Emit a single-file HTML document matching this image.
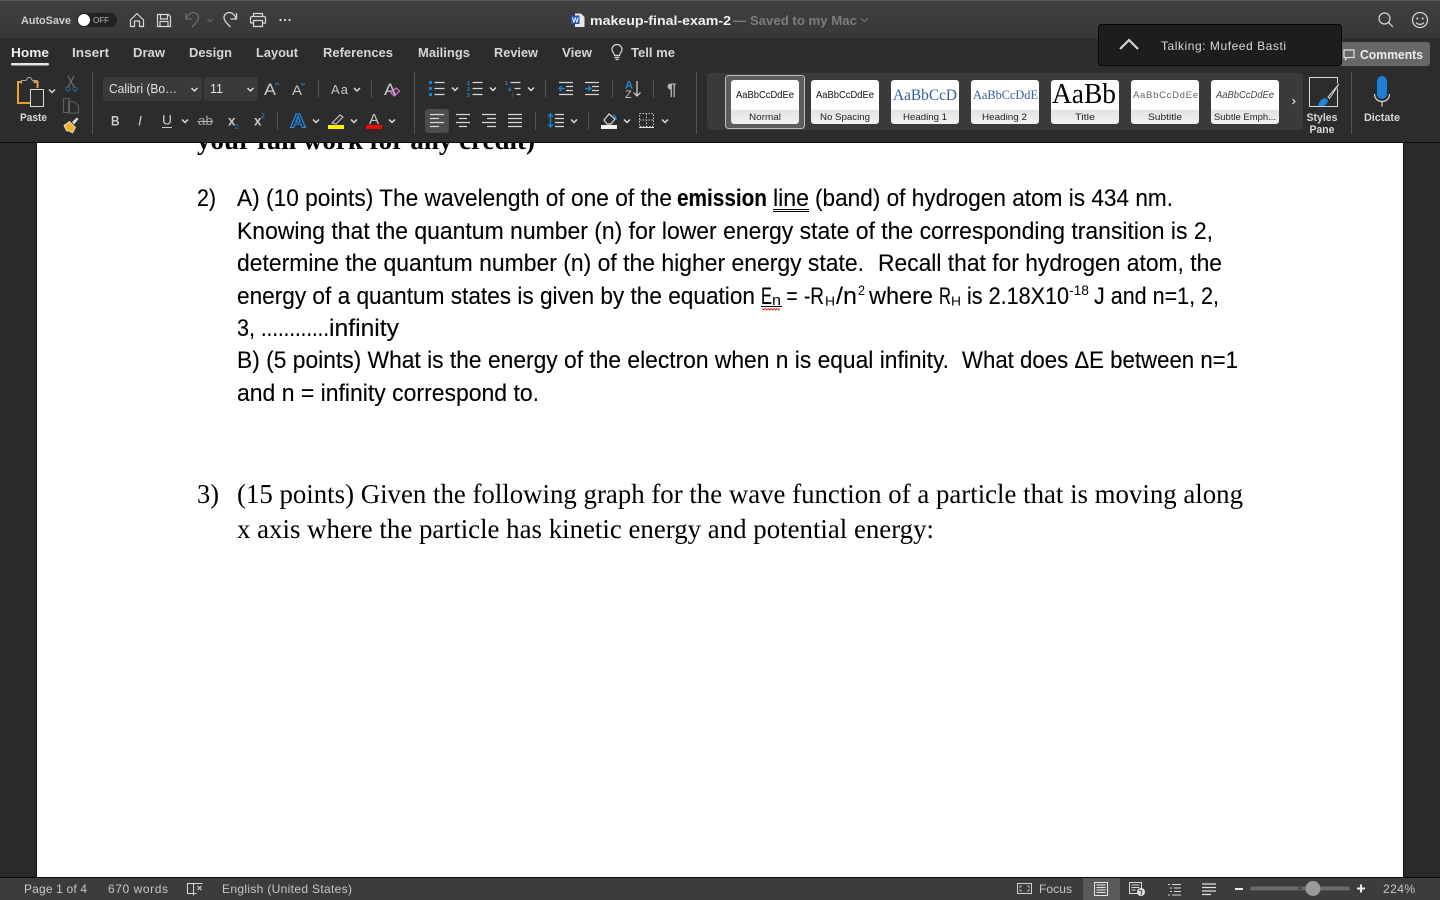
<!DOCTYPE html>
<html lang="en"><head><meta charset="utf-8"><title>makeup-final-exam-2</title>
<style>
html,body{margin:0;padding:0;width:1440px;height:900px;overflow:hidden;background:#2a2a2a}
svg{display:block;position:absolute;left:0;top:0}
text{font-family:"Liberation Sans",sans-serif;white-space:pre}
.u{fill:#d6d6d6;font-size:13px;font-weight:700}
.s{fill:#c8c8c8;font-size:12px}
.r{fill:#d8d8d8;font-size:11px}
.c{fill:#222;font-size:9px}
.d{fill:#000;font-size:24px;stroke:#000;stroke-width:.12}
.m{fill:#000;font-size:27px;font-family:"Liberation Serif",serif}
.l{stroke:#d8d8d8;stroke-width:1.2;fill:none}
.b{stroke:#0f86d8;stroke-width:1.4;fill:none}
.ch{stroke:#ddd;stroke-width:1.5;fill:none}
.dv{stroke:#555;stroke-width:1}
</style></head><body>
<svg width="1440" height="900" viewBox="0 0 1440 900" xmlns="http://www.w3.org/2000/svg">
<defs>
<linearGradient id="tb" x1="0" y1="0" x2="0" y2="1"><stop offset="0" stop-color="#3f3f3f"/><stop offset="1" stop-color="#383838"/></linearGradient>
<linearGradient id="card" x1="0" y1="0" x2="0" y2="1"><stop offset="0" stop-color="#fff"/><stop offset=".67" stop-color="#fff"/><stop offset=".68" stop-color="#e2e2e2"/><stop offset="1" stop-color="#f2f2f2"/></linearGradient>
<path id="chev" d="M-3-1.500 0 1.500 3-1.500" class="ch"/>
</defs>

<!-- document area -->
<rect width="1440" height="900" fill="#2a2a2a"/>
<rect x="36" y="140" width="1" height="740" fill="#111"/>
<rect x="37" y="140" width="1366" height="740" fill="#fff"/>
<rect x="1403" y="140" width="1" height="740" fill="#111"/>

<text x="197" y="149" class="m" style="font-weight:700" textLength="338" lengthAdjust="spacingAndGlyphs">your full work for any credit)</text>

<text x="197" y="206" class="d" textLength="19" lengthAdjust="spacingAndGlyphs">2)</text>
<text x="237" y="206" class="d" textLength="435" lengthAdjust="spacingAndGlyphs">A) (10 points) The wavelength of one of the</text>
<text x="677" y="206" class="d" style="font-weight:700" textLength="90" lengthAdjust="spacingAndGlyphs">emission</text>
<text x="773" y="206" class="d" textLength="36" lengthAdjust="spacingAndGlyphs">line</text>
<path d="M773 209.500H809M773 211.500H809" stroke="#000" stroke-width="1"/>
<text x="815" y="206" class="d" textLength="358" lengthAdjust="spacingAndGlyphs">(band) of hydrogen atom is 434 nm.</text>
<text x="237" y="239" class="d" textLength="976" lengthAdjust="spacingAndGlyphs">Knowing that the quantum number (n) for lower energy state of the corresponding transition is 2,</text>
<text x="237" y="271" class="d" textLength="627" lengthAdjust="spacingAndGlyphs">determine the quantum number (n) of the higher energy state.</text>
<text x="878" y="271" class="d" textLength="344" lengthAdjust="spacingAndGlyphs">Recall that for hydrogen atom, the</text>
<text x="237" y="304" class="d" textLength="518" lengthAdjust="spacingAndGlyphs">energy of a quantum states is given by the equation</text>
<text x="761" y="304" class="d" textLength="11" lengthAdjust="spacingAndGlyphs">E</text>
<text x="772" y="305" class="d" style="font-size:15px;stroke-width:0" textLength="9" lengthAdjust="spacingAndGlyphs">n</text>
<path d="M761 306.500H782" stroke="#000" stroke-width="1"/>
<path d="M762 308.500l1.500 1.500 1.500-1.500 1.500 1.500 1.500-1.500 1.500 1.500 1.500-1.500 1.500 1.500 1.500-1.500 1.500 1.500 1.500-1.500 1.500 1.500 1.500-1.500" stroke="#e0201c" stroke-width=".9" fill="none"/>
<text x="786.500" y="304" class="d" textLength="11" lengthAdjust="spacingAndGlyphs">=</text>
<text x="804" y="304" class="d" textLength="20" lengthAdjust="spacingAndGlyphs">-R</text>
<text x="825" y="305.500" class="d" style="font-size:13px;stroke-width:0" textLength="10" lengthAdjust="spacingAndGlyphs">H</text>
<text x="836" y="304" class="d" textLength="21" lengthAdjust="spacingAndGlyphs">/n</text>
<text x="858" y="295" class="d" style="font-size:13.500px;stroke-width:0" textLength="7" lengthAdjust="spacingAndGlyphs">2</text>
<text x="869" y="304" class="d" textLength="64" lengthAdjust="spacingAndGlyphs">where</text>
<text x="939" y="304" class="d" textLength="12" lengthAdjust="spacingAndGlyphs">R</text>
<text x="951" y="305.500" class="d" style="font-size:13px;stroke-width:0" textLength="10" lengthAdjust="spacingAndGlyphs">H</text>
<text x="967" y="304" class="d" textLength="102" lengthAdjust="spacingAndGlyphs">is 2.18X10</text>
<text x="1069" y="295" class="d" style="font-size:13.500px;stroke-width:0" textLength="20" lengthAdjust="spacingAndGlyphs">-18</text>
<text x="1094" y="304" class="d" textLength="125" lengthAdjust="spacingAndGlyphs">J and n=1, 2,</text>
<text x="237" y="336" class="d" textLength="18" lengthAdjust="spacingAndGlyphs">3,</text>
<text x="261" y="336" class="d" textLength="68" lengthAdjust="spacingAndGlyphs">............</text>
<text x="329" y="336" class="d" textLength="70" lengthAdjust="spacingAndGlyphs">infinity</text>
<text x="237" y="368" class="d" textLength="712" lengthAdjust="spacingAndGlyphs">B) (5 points) What is the energy of the electron when n is equal infinity.</text>
<text x="962" y="368" class="d" textLength="276" lengthAdjust="spacingAndGlyphs">What does ΔE between n=1</text>
<text x="237" y="401" class="d" textLength="302" lengthAdjust="spacingAndGlyphs">and n = infinity correspond to.</text>

<text x="197" y="503" class="m" textLength="22" lengthAdjust="spacingAndGlyphs">3)</text>
<text x="237" y="503" class="m" textLength="1006" lengthAdjust="spacingAndGlyphs">(15 points) Given the following graph for the wave function of a particle that is moving along</text>
<text x="237" y="538" class="m" textLength="697" lengthAdjust="spacingAndGlyphs">x axis where the particle has kinetic energy and potential energy:</text>

<!-- title bar -->
<rect x="0" y="0" width="1440" height="38" fill="url(#tb)"/>
<rect x="0" y="0" width="1440" height="1" fill="#5a5a5a"/>
<rect x="0" y="38" width="1440" height="104" fill="#2c2c2c"/>
<rect x="0" y="142" width="1440" height="1" fill="#0c0c0c"/>

<text x="21" y="24" style="font-size:11px;font-weight:700;fill:#cfcfcf" textLength="50" lengthAdjust="spacingAndGlyphs">AutoSave</text>
<rect x="77" y="13" width="40" height="14" rx="7" fill="#222"/>
<circle cx="84" cy="20" r="6" fill="#fff"/>
<text x="93" y="23" style="font-size:8px;fill:#bbb" textLength="16" lengthAdjust="spacingAndGlyphs">OFF</text>

<path d="M130.500 20 137 13.500l6.500 6.500v6.500h-4v-5.500h-5v5.500h-4z" class="l" stroke-linejoin="round"/>
<path d="M157.500 14.500h11l2 2v10h-13zM160.500 14.500v4.500h7v-4.500M160 26.500v-5h8v5" class="l"/>
<path d="M186 13v6h6M186 19c2-4.500 4-6.500 7-6.500 3.500 0 5.500 2.500 5.500 5 0 3-3 6-6.500 9.500" style="fill:none;stroke:#6b6b6b;stroke-width:1.300"/>
<path d="M207.500 19l2.500 2.500 2.500-2.500" style="fill:none;stroke:#6b6b6b;stroke-width:1.200"/>
<path d="M236.500 13v6h-6M236.500 19c-2-4.500-4-6.500-7-6.500-3.500 0-5.500 2.500-5.500 5 0 3 3 6 6.500 9.500" class="l" style="stroke-width:1.300"/>
<path d="M253.500 17v-3.500h9v3.500M250.500 23v-5a1.500 1.500 0 0 1 1.500-1.500h12a1.500 1.500 0 0 1 1.500 1.500v5h-3M253.500 23h-3M253.500 20.500h9v6h-9z" class="l"/>
<circle cx="280.500" cy="20" r="1.100" fill="#ddd"/><circle cx="285" cy="20" r="1.100" fill="#ddd"/><circle cx="289.500" cy="20" r="1.100" fill="#ddd"/>

<!-- doc title -->
<path d="M575 13.500h6l3.500 3.500v10h-9.500z" fill="#e8e8e8"/>
<rect x="571" y="15.500" width="8.500" height="8.500" fill="#1f57c3"/>
<text x="572" y="22.500" style="font-size:7px;font-weight:700;fill:#fff">W</text>
<text x="590" y="25" style="font-size:13px;font-weight:700;fill:#f0f0f0" textLength="141" lengthAdjust="spacingAndGlyphs">makeup-final-exam-2</text>
<text x="733" y="25" style="font-size:13px;font-weight:700;fill:#7d7d7d" textLength="124" lengthAdjust="spacingAndGlyphs">— Saved to my Mac</text>
<path d="M861 18.500l3.500 3 3.500-3" style="fill:none;stroke:#7d7d7d;stroke-width:1.100"/>

<circle cx="1384.500" cy="18.500" r="5.500" class="l"/><path d="M1388.500 22.500l4.500 4.500" class="l"/>
<circle cx="1420" cy="20" r="7.500" class="l"/><circle cx="1417.300" cy="18.500" r="1" fill="#ddd"/><circle cx="1422.700" cy="18.500" r="1" fill="#ddd"/><path d="M1416 22.500c2 2.500 6 2.500 8 0" class="l"/>

<!-- tabs -->
<text x="11" y="57" class="u" style="fill:#f0f0f0" textLength="38" lengthAdjust="spacingAndGlyphs">Home</text>
<rect x="11" y="63" width="38" height="2.500" rx="1" fill="#e6e6e6"/>
<text x="72" y="57" class="u" textLength="37" lengthAdjust="spacingAndGlyphs">Insert</text>
<text x="133" y="57" class="u" textLength="32" lengthAdjust="spacingAndGlyphs">Draw</text>
<text x="189" y="57" class="u" textLength="43" lengthAdjust="spacingAndGlyphs">Design</text>
<text x="256" y="57" class="u" textLength="42" lengthAdjust="spacingAndGlyphs">Layout</text>
<text x="323" y="57" class="u" textLength="70" lengthAdjust="spacingAndGlyphs">References</text>
<text x="418" y="57" class="u" textLength="52" lengthAdjust="spacingAndGlyphs">Mailings</text>
<text x="494" y="57" class="u" textLength="44" lengthAdjust="spacingAndGlyphs">Review</text>
<text x="562" y="57" class="u" textLength="30" lengthAdjust="spacingAndGlyphs">View</text>
<path d="M614.500 55.500c0-2.500-2.500-3-2.500-6a5 5 0 0 1 10 0c0 3-2.500 3.500-2.500 6zM614.500 57.500h5M615.500 59.500h3" class="l"/>
<text x="631" y="57" class="u" textLength="44" lengthAdjust="spacingAndGlyphs">Tell me</text>

<!-- comments + notification -->
<rect x="1330" y="42" width="100" height="24" rx="3" fill="#676767"/>
<path d="M1344 50h10v7.500h-6.500l-2 2v-2h-1.500z" class="l" style="stroke:#e0e0e0"/>
<text x="1360" y="59" class="u" style="fill:#ececec" textLength="63" lengthAdjust="spacingAndGlyphs">Comments</text>
<rect x="1098.500" y="24.500" width="243" height="41" rx="3" fill="#1d1d1d" stroke="#070707"/>
<path d="M1120 49l9-9 9 9" style="fill:none;stroke:#d4d4d4;stroke-width:2.200"/>
<text x="1161" y="50" style="font-size:12px;fill:#d8d8d8" textLength="125">Talking: Mufeed Basti</text>

<!-- clipboard -->
<path d="M21 82h-3v21h12M33.500 82h4v6" style="fill:none;stroke:#f0a01e;stroke-width:2"/>
<path d="M21.500 84v-3.500h4.500l2-3h2.500l2 3h4.500v3" style="fill:none;stroke:#a8a8a8;stroke-width:1"/>
<rect x="30.500" y="89.500" width="13" height="17" fill="#2c2c2c" stroke="#d8d8d8" stroke-width="1"/>
<use href="#chev" x="52" y="91"/>
<text x="20" y="121" class="r" style="font-weight:700" textLength="27" lengthAdjust="spacingAndGlyphs">Paste</text>
<path d="M68 76l6 11M74 76l-6 11" style="stroke:#707070;stroke-width:1.200"/>
<circle cx="68" cy="89" r="2" fill="none" stroke="#2a6da8"/><circle cx="75" cy="89" r="2" fill="none" stroke="#2a6da8"/>
<path d="M63.500 98.500h6v14h-6zM68.500 101.500h5l5 4v7.500h-10z" style="fill:#2c2c2c;stroke:#5e5e5e;stroke-width:1.100"/>
<path d="M64 125.500l5.500-4 6 6-3 5.500-3.500-2-2.500 0z" fill="#f0b030" stroke="#e8e8e8" stroke-width=".8"/><path d="M72 122l5-4.500 1.500 1.500-4.500 5.500z" fill="#ddd"/>
<line class="dv" x1="92.500" y1="72" x2="92.500" y2="134"/>

<!-- font -->
<rect x="103" y="77" width="99" height="24" rx="3" fill="#3a3a3a"/>
<rect x="204" y="77" width="54" height="24" rx="3" fill="#3a3a3a"/>
<text x="109" y="93" style="font-size:12.500px;fill:#e2e2e2" textLength="68" lengthAdjust="spacingAndGlyphs">Calibri (Bo…</text>
<use href="#chev" x="194.500" y="89.500"/>
<text x="210" y="93" style="font-size:12.500px;fill:#e2e2e2">11</text>
<use href="#chev" x="250.500" y="89.500"/>
<text x="264" y="95" style="font-size:17px;fill:#c8c8c8" textLength="12" lengthAdjust="spacingAndGlyphs">A</text><path d="M275 85l2-2 2 2" class="b" style="stroke-width:1"/>
<text x="292" y="95" style="font-size:14px;fill:#c8c8c8" textLength="10" lengthAdjust="spacingAndGlyphs">A</text><path d="M301 83l2 2 2-2" class="b" style="stroke-width:1"/>
<line class="dv" x1="318.500" y1="80" x2="318.500" y2="98"/>
<text x="331" y="94" style="font-size:13px;fill:#c8c8c8" textLength="17">Aa</text>
<use href="#chev" x="357" y="89.500"/>
<line class="dv" x1="371.500" y1="80" x2="371.500" y2="98"/>
<text x="384" y="95" style="font-size:17px;fill:#c8c8c8" textLength="12" lengthAdjust="spacingAndGlyphs">A</text>
<path d="M391 93l5-5 3.500 3-5 5z" fill="none" stroke="#d468d0" stroke-width="1.300"/>
<line class="dv" x1="414.500" y1="72" x2="414.500" y2="134"/>

<text x="111" y="125.500" style="font-size:14px;font-weight:700;fill:#c8c8c8" textLength="8.500" lengthAdjust="spacingAndGlyphs">B</text>
<text x="138" y="125.500" style="font-size:14px;font-style:italic;fill:#c8c8c8">I</text>
<text x="162" y="124.500" style="font-size:13.500px;fill:#c8c8c8" textLength="10" lengthAdjust="spacingAndGlyphs">U</text><rect x="162" y="127" width="10" height="1" fill="#c8c8c8"/>
<use href="#chev" x="185" y="121"/>
<text x="198" y="125" style="font-size:13px;fill:#a8a8a8" textLength="15" lengthAdjust="spacingAndGlyphs">ab</text><rect x="197" y="121" width="16" height="1" fill="#b0b0b0"/>
<text x="228" y="125.500" style="font-size:14px;font-weight:700;fill:#c8c8c8" textLength="7.500" lengthAdjust="spacingAndGlyphs">x</text><text x="235" y="129" style="font-size:7px;fill:#1e8ee0">2</text>
<text x="254" y="125.500" style="font-size:14px;font-weight:700;fill:#c8c8c8" textLength="7.500" lengthAdjust="spacingAndGlyphs">x</text><text x="261" y="118" style="font-size:7px;fill:#1e8ee0">2</text>
<line class="dv" x1="277.500" y1="112" x2="277.500" y2="130"/>
<text x="290" y="127.500" style="font-size:19px;font-weight:700;fill:#17334f;stroke:#2f8fe6;stroke-width:1" textLength="16" lengthAdjust="spacingAndGlyphs">A</text>
<use href="#chev" x="316" y="121"/>
<path d="M332 123l8-8 3 2-7 7z" fill="none" stroke="#c8c8c8" stroke-width="1.100"/>
<rect x="328" y="125" width="16" height="4" fill="#fff200"/>
<use href="#chev" x="354" y="121"/>
<text x="369" y="124" style="font-size:15px;fill:#c8c8c8">A</text>
<rect x="366" y="125" width="16" height="4" fill="#f00"/>
<use href="#chev" x="392" y="121"/>

<!-- paragraph row 1 -->
<rect x="429" y="81" width="3" height="3" fill="#0f86d8"/><rect x="429" y="87" width="3" height="3" fill="#0f86d8"/><rect x="429" y="93" width="3" height="3" fill="#0f86d8"/>
<path d="M434.500 82.500h10M434.500 88.500h10M434.500 94.500h10" class="l"/>
<use href="#chev" x="455" y="89"/>
<text x="467" y="85" style="font-size:5.500px;font-weight:700;fill:#1e8ee0">1</text><text x="467" y="91" style="font-size:5.500px;font-weight:700;fill:#1e8ee0">2</text><text x="467" y="97" style="font-size:5.500px;font-weight:700;fill:#1e8ee0">3</text>
<path d="M472.500 82.500h10M472.500 88.500h10M472.500 94.500h10" class="l"/>
<use href="#chev" x="493" y="89"/>
<text x="505" y="85" style="font-size:5.500px;font-weight:700;fill:#1e8ee0">1</text><text x="508" y="91" style="font-size:6px;font-weight:700;fill:#1e8ee0">a</text><text x="512" y="97" style="font-size:6px;fill:#1e8ee0">i</text>
<path d="M510.500 82.500h10M514.500 88.500h6M516.500 94.500h4" class="l"/>
<use href="#chev" x="531" y="89"/>
<line class="dv" x1="545.500" y1="80" x2="545.500" y2="98"/>
<path d="M559 82.500h14M566 86.500h7M566 90.500h7M559 94.500h14" class="l"/><path d="M565 88.500h-6M561.500 86l-2.500 2.500 2.500 2.500" class="b"/>
<path d="M585 82.500h14M592 86.500h7M592 90.500h7M585 94.500h14" class="l"/><path d="M585 88.500h6M588.500 86l2.500 2.500-2.500 2.500" class="b"/>
<line class="dv" x1="612.500" y1="80" x2="612.500" y2="98"/>
<text x="625" y="88.500" style="font-size:11px;font-weight:700;fill:#1e8ee0">A</text><text x="625" y="98" style="font-size:11px;fill:#c8c8c8">Z</text>
<path d="M637 81v15M633.500 92.500l3.500 3.500 3.500-3.500" class="l"/>
<line class="dv" x1="653.500" y1="80" x2="653.500" y2="98"/>
<text x="667" y="95" style="font-size:17px;font-weight:700;fill:#b8b8b8">¶</text>
<line class="dv" x1="696.500" y1="72" x2="696.500" y2="134"/>

<!-- paragraph row 2 -->
<rect x="425" y="109" width="24" height="24" rx="3" fill="#4c4c4c"/>
<path d="M430 114.500h14M430 118.500h9M430 122.500h14M430 126.500h9" class="l"/>
<path d="M456 114.500h14M459 118.500h8M456 122.500h14M459 126.500h8" class="l"/>
<path d="M482 114.500h14M487 118.500h9M482 122.500h14M487 126.500h9" class="l"/>
<path d="M508 114.500h14M508 118.500h14M508 122.500h14M508 126.500h14" class="l"/>
<line class="dv" x1="535.500" y1="112" x2="535.500" y2="130"/>
<path d="M550.500 114v13M548 116.500l2.500-2.500 2.500 2.500M548 124.500l2.500 2.500 2.500-2.500" class="b"/>
<path d="M555 114.500h9M555 118.500h9M555 122.500h9M555 126.500h9" class="l"/>
<use href="#chev" x="574" y="121"/>
<line class="dv" x1="588.500" y1="112" x2="588.500" y2="130"/>
<path d="M604 120l5-6 6 5-4 5h-4z" class="l"/><path d="M613 115c2 0 3 2 3 5" class="b"/>
<rect x="601" y="125" width="16" height="4" fill="#efefef"/>
<use href="#chev" x="627" y="121"/>
<path d="M639.500 113.500h14v13h-14zM646.500 113.500v13M639.500 120h14" style="fill:none;stroke:#c8c8c8;stroke-width:1;stroke-dasharray:1.500 1.500"/><rect x="639" y="127" width="15" height="1" fill="#e0e0e0"/>
<use href="#chev" x="665" y="121"/>

<!-- styles gallery -->
<rect x="707" y="73" width="596" height="57" rx="3" fill="#3a3a3a"/>
<rect x="725.500" y="75.500" width="79" height="53" rx="3" fill="#5c5c5c" stroke="#bdbdbd"/>
<g>
<rect x="731" y="80" width="68" height="44" rx="3" fill="url(#card)"/>
<rect x="811" y="80" width="68" height="44" rx="3" fill="url(#card)"/>
<rect x="891" y="80" width="68" height="44" rx="3" fill="url(#card)"/>
<rect x="971" y="80" width="68" height="44" rx="3" fill="url(#card)"/>
<rect x="1051" y="80" width="68" height="44" rx="3" fill="url(#card)"/>
<rect x="1131" y="80" width="68" height="44" rx="3" fill="url(#card)"/>
<rect x="1211" y="80" width="68" height="44" rx="3" fill="url(#card)"/>
</g>
<text x="736" y="98" style="font-size:10px;fill:#111" textLength="58" lengthAdjust="spacingAndGlyphs">AaBbCcDdEe</text>
<text x="816" y="98" style="font-size:10px;fill:#111" textLength="58" lengthAdjust="spacingAndGlyphs">AaBbCcDdEe</text>
<text x="893" y="100" style="font-size:16px;font-family:'Liberation Serif',serif;fill:#2f5f9e" textLength="64" lengthAdjust="spacingAndGlyphs">AaBbCcD</text>
<text x="973" y="99" style="font-size:13px;font-family:'Liberation Serif',serif;fill:#2f5f9e" textLength="65" lengthAdjust="spacingAndGlyphs">AaBbCcDdE</text>
<text x="1052" y="103" style="font-size:28px;font-family:'Liberation Serif',serif;fill:#000" textLength="64" lengthAdjust="spacingAndGlyphs">AaBb</text>
<text x="1133" y="98" style="font-size:9.500px;fill:#666" textLength="65">AaBbCcDdEe</text>
<text x="1216" y="98" style="font-size:10px;font-style:italic;fill:#444" textLength="58" lengthAdjust="spacingAndGlyphs">AaBbCcDdEe</text>
<text x="749" y="120" class="c" textLength="32" lengthAdjust="spacingAndGlyphs">Normal</text>
<text x="820" y="120" class="c" textLength="50" lengthAdjust="spacingAndGlyphs">No Spacing</text>
<text x="903" y="120" class="c" textLength="44" lengthAdjust="spacingAndGlyphs">Heading 1</text>
<text x="982" y="120" class="c" textLength="45" lengthAdjust="spacingAndGlyphs">Heading 2</text>
<text x="1075" y="120" class="c" textLength="20" lengthAdjust="spacingAndGlyphs">Title</text>
<text x="1148" y="120" class="c" textLength="34" lengthAdjust="spacingAndGlyphs">Subtitle</text>
<text x="1214" y="120" class="c" textLength="62" lengthAdjust="spacingAndGlyphs">Subtle Emph...</text>
<path d="M1292.500 99l2.500 2.500-2.500 2.500" style="fill:none;stroke:#ddd;stroke-width:1.200"/>

<path d="M1309.500 77.500h28v29h-28z" style="fill:#2c2c2c;stroke:#d8d8d8;stroke-width:1"/>
<path d="M1338 84l-12 14" style="stroke:#2c2c2c;stroke-width:5"/>
<path d="M1339 84l-11 13 1.500 1.500z" style="fill:none;stroke:#d8d8d8;stroke-width:1"/>
<path d="M1318 106c1-4 3-7 7-8l3 2c0 4-4 7-10 6z" fill="#1f86e0"/>
<text x="1322" y="121" text-anchor="middle" class="r" style="font-weight:700" textLength="31" lengthAdjust="spacingAndGlyphs">Styles</text>
<text x="1322" y="133" text-anchor="middle" class="r" style="font-weight:700" textLength="25" lengthAdjust="spacingAndGlyphs">Pane</text>
<line class="dv" x1="1351.500" y1="72" x2="1351.500" y2="134"/>
<rect x="1377" y="76" width="10" height="23" rx="5" fill="#1f7fd8"/>
<path d="M1374.500 94c0 10 15 10 15 0M1382 101.500v5" style="fill:none;stroke:#d8d8d8;stroke-width:1.200"/>
<text x="1364" y="121" class="r" style="font-weight:700" textLength="36" lengthAdjust="spacingAndGlyphs">Dictate</text>

<!-- status bar -->
<rect x="0" y="877" width="1440" height="1" fill="#0c0c0c"/>
<rect x="0" y="878" width="1440" height="22" fill="#3c3c3c"/>
<text x="24" y="893" class="s" textLength="63">Page 1 of 4</text>
<text x="108" y="893" class="s" textLength="60">670 words</text>
<path d="M187.500 883.500h6v10h-6zM193.500 883.500h9M193.500 893.500h3M193.500 893.500v2" class="l" style="stroke-width:1"/><path d="M197.500 886l4 4M201.500 886l-4 4" class="l" style="stroke-width:1"/>
<text x="222" y="893" class="s" textLength="130">English (United States)</text>
<rect x="1017.500" y="883.500" width="14" height="10" fill="none" stroke="#d0d0d0"/>
<path d="M1020 888v-2h2M1029 888v-2h-2M1020 889v2h2M1029 889v2h-2" style="fill:none;stroke:#d0d0d0;stroke-width:.8"/>
<text x="1039" y="893" class="s" textLength="33">Focus</text>
<rect x="1083" y="878" width="37" height="22" fill="#5a5a5a"/>
<rect x="1094.500" y="882.500" width="13" height="13" fill="none" stroke="#e4e4e4"/>
<path d="M1096.500 885h9M1096.500 887.500h9M1096.500 890h9M1096.500 892.500h9" style="stroke:#e4e4e4;stroke-width:1"/>
<rect x="1129.500" y="882.500" width="12" height="11" fill="none" stroke="#d8d8d8"/>
<path d="M1131.500 885h8M1131.500 887.500h8M1131.500 890h4" style="stroke:#d8d8d8;stroke-width:1"/>
<circle cx="1141" cy="892" r="4" fill="#e4e4e4"/><path d="M1139 890l3 1-1 4" style="fill:none;stroke:#3c3c3c;stroke-width:1"/>
<path d="M1168 884.500h2M1172 884.500h9M1170 888h2M1174 888h7M1170 891.500h2M1174 891.500h7M1168 895h2M1172 895h9" style="stroke:#d8d8d8;stroke-width:1"/>
<path d="M1202 884h14M1202 887.500h14M1202 891h14M1202 894.500h9" style="stroke:#e0e0e0;stroke-width:1.200"/>
<rect x="1235" y="888" width="8" height="2" fill="#e8e8e8"/>
<rect x="1250" y="886.500" width="100" height="4" rx="2" fill="#6a6a6a"/>
<circle cx="1300" cy="888.500" r="1.500" fill="#444"/>
<circle cx="1313" cy="888.500" r="7.500" fill="#9a9a9a"/>
<path d="M1361 884.500v8M1357 888.500h8" style="stroke:#eee;stroke-width:2"/>
<text x="1383" y="893" class="s" textLength="32">224%</text>
</svg>
</body></html>
